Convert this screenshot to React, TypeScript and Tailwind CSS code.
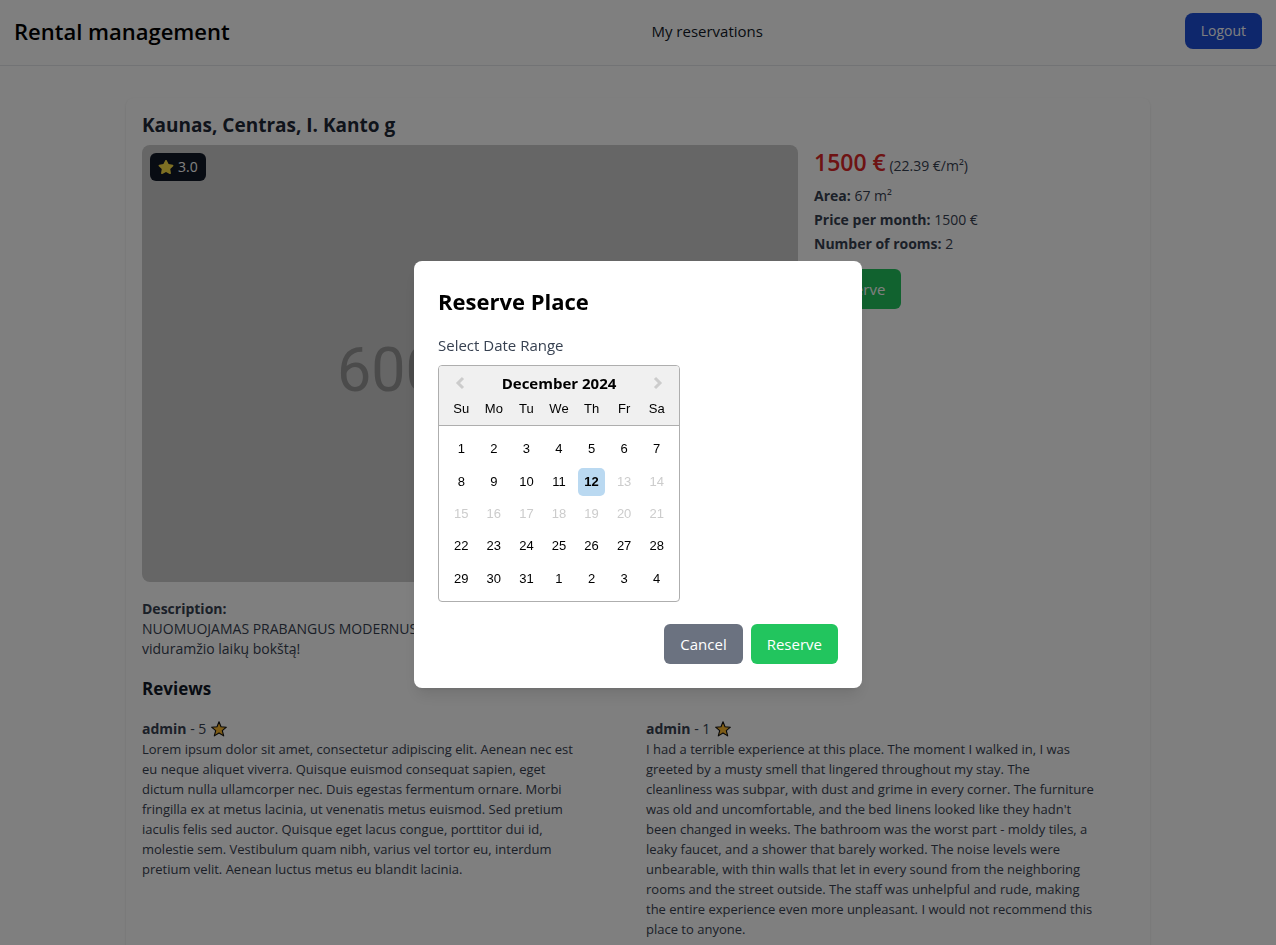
import type { ReactNode } from "react";
import { FaStar } from "react-icons/fa";

const weekdays = ["Su", "Mo", "Tu", "We", "Th", "Fr", "Sa"];

const days = [
  1, 2, 3, 4, 5, 6, 7, 8, 9, 10, 11, 12, 13, 14, 15, 16, 17, 18, 19, 20, 21, 22,
  23, 24, 25, 26, 27, 28, 29, 30, 31, 1, 2, 3, 4,
];

const reviews = [
  {
    author: "admin",
    rating: 5,
    text: "Lorem ipsum dolor sit amet, consectetur adipiscing elit. Aenean nec est eu neque aliquet viverra. Quisque euismod consequat sapien, eget dictum nulla ullamcorper nec. Duis egestas fermentum ornare. Morbi fringilla ex at metus lacinia, ut venenatis metus euismod. Sed pretium iaculis felis sed auctor. Quisque eget lacus congue, porttitor dui id, molestie sem. Vestibulum quam nibh, varius vel tortor eu, interdum pretium velit. Aenean luctus metus eu blandit lacinia.",
  },
  {
    author: "admin",
    rating: 1,
    text: "I had a terrible experience at this place. The moment I walked in, I was greeted by a musty smell that lingered throughout my stay. The cleanliness was subpar, with dust and grime in every corner. The furniture was old and uncomfortable, and the bed linens looked like they hadn't been changed in weeks. The bathroom was the worst part - moldy tiles, a leaky faucet, and a shower that barely worked. The noise levels were unbearable, with thin walls that let in every sound from the neighboring rooms and the street outside. The staff was unhelpful and rude, making the entire experience even more unpleasant. I would not recommend this place to anyone.",
  },
];

function OutlinedStar() {
  return (
    <svg viewBox="0 0 18 18" className="size-[18px]" aria-hidden="true">
      <path
        d="M9 1.8 11 6.8 16.4 7.2 12.3 10.6 13.7 15.9 9 13 4.3 15.9 5.7 10.6 1.6 7.2 7 6.8Z"
        fill="#fdb92c"
        stroke="#111111"
        strokeWidth="1.1"
        strokeLinejoin="round"
      />
    </svg>
  );
}

function Chevron({ points }: { points: string }) {
  return (
    <svg viewBox="0 0 10 14" className="h-3.5 w-2.5" fill="none" aria-hidden="true">
      <polyline points={points} stroke="#cccccc" strokeWidth="3" />
    </svg>
  );
}

function Fact({ label, children }: { label: string; children: ReactNode }) {
  return (
    <p className="leading-6">
      <strong className="font-bold">{label}</strong> {children}
    </p>
  );
}

function Calendar() {
  return (
    <div className="w-[242px] overflow-hidden rounded border border-[#aeaeae] font-['Liberation_Sans',Arial,sans-serif] text-[13px] text-black">
      <div className="border-b border-[#aeaeae] bg-[#f0f0f0] px-1.5 pt-[7px] pb-px">
        <div className="flex h-5 items-center justify-between px-2.5">
          <button type="button" aria-label="Previous Month">
            <Chevron points="8,2 3,7 8,12" />
          </button>
          <h3 className="text-[15px] font-bold font-['Open_Sans','Noto_Sans',sans-serif]">December 2024</h3>
          <button type="button" aria-label="Next Month">
            <Chevron points="2,2 7,7 2,12" />
          </button>
        </div>
        <div className="grid h-[31px] grid-cols-7 items-center text-center">
          {weekdays.map((d) => (
            <span key={d}>{d}</span>
          ))}
        </div>
      </div>
      <div className="mx-1.5 mt-[7px] mb-1.5 grid h-[162px] grid-cols-7 grid-rows-5 place-items-center">
        {days.map((d, i) => {
          if (i === 11)
            return (
              <button key={i} type="button" className="h-7 w-[27px] rounded-[5px] bg-[#bad9f1] font-bold">
                {d}
              </button>
            );
          if (i > 11 && i < 21)
            return (
              <button key={i} type="button" disabled className="h-7 w-[27px] text-[#cccccc]">
                {d}
              </button>
            );
          return (
            <button key={i} type="button" className="h-7 w-[27px]">
              {d}
            </button>
          );
        })}
      </div>
    </div>
  );
}

function ReserveDialog() {
  return (
    <div className="fixed inset-0 flex items-center justify-center bg-black/50 pt-1">
      <div
        role="dialog"
        aria-modal="true"
        aria-labelledby="reserve-title"
        className="w-full max-w-md rounded-lg bg-white p-6 shadow-lg"
      >
        <h2 id="reserve-title" className="mb-4 text-[22px] leading-8 font-bold text-black">
          Reserve Place
        </h2>
        <p className="mb-2 text-[15px] leading-6 text-[#374151]">Select Date Range</p>
        <Calendar />
        <div className="mt-[22px] flex justify-end gap-2 text-[15px] leading-6 text-white">
          <button type="button" className="rounded-md bg-[#6b7280] px-4 py-2">
            Cancel
          </button>
          <button type="button" className="rounded-md bg-[#22c55e] px-4 py-2">
            Reserve
          </button>
        </div>
      </div>
    </div>
  );
}

export default function App() {
  return (
    <div className="min-h-screen bg-white font-['Open_Sans','Noto_Sans',sans-serif] text-[14px] leading-5 text-[#374151]">
      <header className="flex items-center justify-between border-b border-[#e5e7eb] px-3.5 pt-[13px] pb-4">
        <h1 className="text-[22px] leading-8 font-semibold text-black">Rental management</h1>
        <nav>
          <a href="#reservations" className="text-[15px] text-[#111827]">
            My reservations
          </a>
        </nav>
        <button type="button" className="rounded-lg bg-[#1d4ed8] px-4 py-2 text-white">
          Logout
        </button>
      </header>

      <main className="mx-auto mt-8 max-w-5xl rounded-lg bg-white px-4 pt-[13px] pb-4 shadow-sm">
        <h2 className="mb-1.5 text-[19px] leading-7 font-bold text-[#1f2937]">Kaunas, Centras, I. Kanto g</h2>
        <div className="grid grid-cols-3 gap-4">
          <div className="col-span-2">
            <div className="relative flex aspect-[3/2] items-center justify-center rounded-lg bg-[#cccccc] pt-3 font-[Roboto,Arial,sans-serif] text-[61px] text-[#969696]">
              600 x 400
              <div className="absolute top-2 left-2 flex items-center gap-1 rounded-md bg-[#111827] px-2 py-1 font-['Open_Sans','Noto_Sans',sans-serif] text-[14px] leading-5 text-white">
                <FaStar className="size-4 text-[#fde047]" aria-hidden="true" />
                3.0
              </div>
            </div>
            <section className="mt-[17px]">
              <h3 className="font-bold">Description:</h3>
              <p>
                NUOMUOJAMAS PRABANGUS MODERNUS BUTAS KAUNO CENTRE su nuostabiu vaizdu tiesiai į viduramžio laikų bokštą!
              </p>
            </section>
          </div>
          <div>
            <p className="mb-px leading-[34px]">
              <span className="text-[23px] font-semibold text-[#dc2626]">1500 €</span>{" "}
              <span className="font-medium">(22.39 €/m²)</span>
            </p>
            <Fact label="Area:">67 m²</Fact>
            <Fact label="Price per month:">1500 €</Fact>
            <Fact label="Number of rooms:">2</Fact>
            <button
              type="button"
              className="mt-[13px] rounded-md bg-[#22c55e] px-4 py-2 text-[15px] leading-6 text-white"
            >
              Reserve
            </button>
          </div>
        </div>

        <section className="mt-4">
          <h2 className="mb-4 text-[17px] leading-7 font-bold text-[#111827]">Reviews</h2>
          <div className="grid grid-cols-2 gap-4">
            {reviews.map((r) => (
              <article key={r.text} className="pr-10">
                <h3 className="flex h-5 items-center gap-1">
                  <span>
                    <strong className="font-bold">{r.author}</strong> - {r.rating}
                  </span>
                  <OutlinedStar />
                </h3>
                <p className="text-[13px] leading-5">{r.text}</p>
              </article>
            ))}
          </div>
        </section>
      </main>
      <ReserveDialog />
    </div>
  );
}
